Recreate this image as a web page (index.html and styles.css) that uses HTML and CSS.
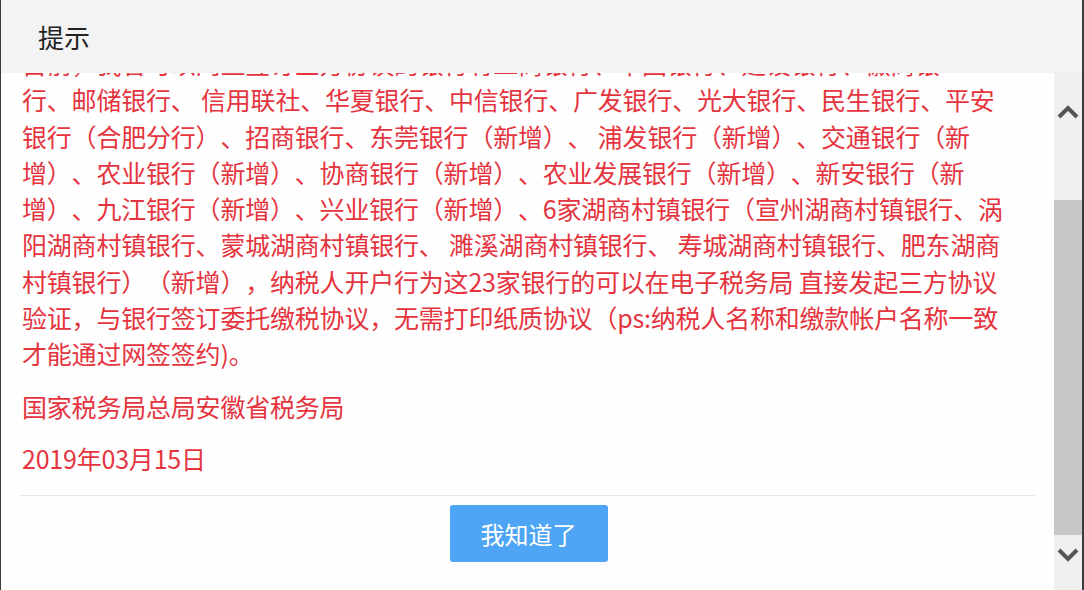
FILE: index.html
```html
<!DOCTYPE html>
<html lang="zh-CN">
<head>
<meta charset="utf-8">
<title>提示</title>
<link rel="stylesheet" href="styles.css">
</head>
<body>
<div class="dialog">
  <div class="header">提示</div>
  <div class="main">
    <div class="viewport">
      <div class="scroll">
        <p class="notice">目前，我省可以网上签订三方协议的银行有工商银行、中国银行、建设银行、徽商银<br>行、邮储银行、 信用联社、华夏银行、中信银行、广发银行、光大银行、民生银行、平安<br>银行（合肥分行）、招商银行、东莞银行（新增）、 浦发银行（新增）、交通银行（新<br>增）、农业银行（新增）、协商银行（新增）、农业发展银行（新增）、新安银行（新<br>增）、九江银行（新增）、兴业银行（新增）、6家湖商村镇银行（宣州湖商村镇银行、涡<br>阳湖商村镇银行、蒙城湖商村镇银行、 濉溪湖商村镇银行、 寿城湖商村镇银行、肥东湖商<br>村镇银行）（新增），纳税人开户行为这23家银行的可以在电子税务局 直接发起三方协议<br>验证，与银行签订委托缴税协议，无需打印纸质协议（ps:纳税人名称和缴款帐户名称一致<br>才能通过网签签约)。</p>
        <p class="sign">国家税务局总局安徽省税务局</p>
        <p class="date">2019年03月15日</p>
        <div class="footer">
          <button class="btn" type="button">我知道了</button>
        </div>
      </div>
    </div>
    <div class="scrollbar">
      <div class="arrow">
        <svg width="22" height="14" viewBox="0 0 22 14"><path d="M2 12 L11 3 L20 12" fill="none" stroke="#555" stroke-width="4"/></svg>
      </div>
      <div class="track"><div class="thumb"></div></div>
      <div class="arrow">
        <svg width="22" height="14" viewBox="0 0 22 14"><path d="M2 2 L11 11 L20 2" fill="none" stroke="#555" stroke-width="4"/></svg>
      </div>
    </div>
  </div>
</div>
</body>
</html>
```
FILE: styles.css
```css
* { box-sizing: border-box; }
html, body { margin: 0; padding: 0; }
body {
  width: 1084px;
  height: 590px;
  overflow: hidden;
  background: #fefefe;
  font-family: "Noto Sans CJK SC", "Noto Sans", sans-serif;
  text-spacing-trim: space-all;
}
.dialog {
  display: flex;
  flex-direction: column;
  height: 590px;
  border-left: 1px solid #3c3c3c;
  border-right: 2px solid #3c3c3c;
}
.header {
  height: 73px;
  flex: none;
  background: #f3f3f4;
  padding-left: 37px;
  display: flex;
  align-items: center;
  font-size: 26px;
  color: #222;
}
.main {
  flex: 1;
  display: flex;
  min-height: 0;
}
.viewport {
  flex: 1;
  overflow: hidden;
  background: #fefefe;
}
.scroll {
  margin-top: -28px;
  padding: 0 19px;
}
.notice, .sign, .date {
  margin: 0;
  padding: 0 2px;
  font-size: 25px;
  line-height: 36.3px;
  color: #e5343e;
  white-space: nowrap;
  letter-spacing: -0.2px;
  text-spacing-trim: space-all;
}
.sign { margin-top: 16px; }
.date { margin-top: 16px; }
.footer {
  margin-top: 19px;
  border-top: 1px solid #e9e9eb;
  padding-top: 9px;
  display: flex;
  justify-content: center;
}
.btn {
  width: 158px;
  height: 57px;
  border: none;
  border-radius: 3px;
  background: #4ea5f6;
  color: #fff;
  font-family: "Noto Sans CJK SC", sans-serif;
  font-size: 24px;
  padding: 0;
  margin-left: 2px;
}
.scrollbar {
  width: 28px;
  flex: none;
  background: #f0f0f0;
  display: flex;
  flex-direction: column;
  padding-top: 19px;
  padding-bottom: 15px;
}
.arrow {
  height: 40px;
  flex: none;
  display: flex;
  align-items: center;
  justify-content: center;
}
.track {
  flex: 1;
  display: flex;
  flex-direction: column;
}
.thumb {
  margin-top: 68px;
  flex: 1;
  background: #c8c8c8;
}
```
